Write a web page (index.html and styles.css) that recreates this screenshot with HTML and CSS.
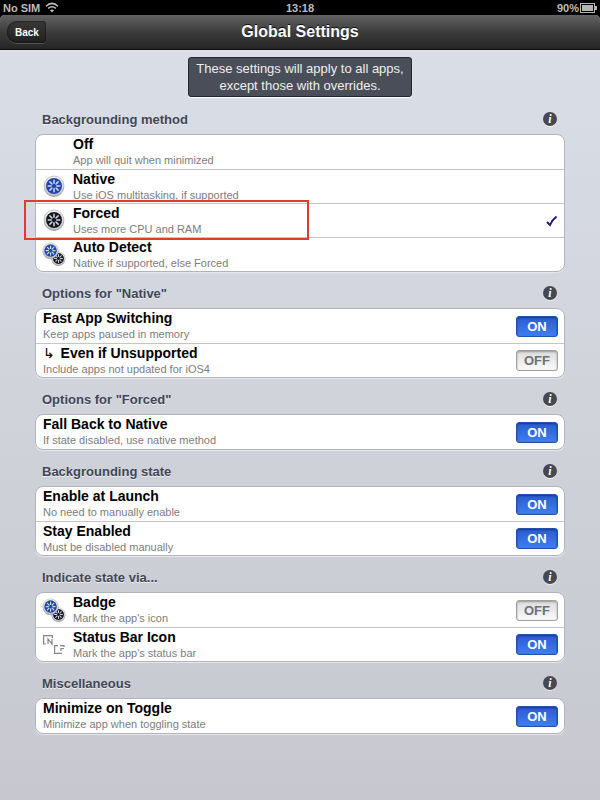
FILE: index.html
```html
<!DOCTYPE html>
<html lang="en">
<head>
    <meta charset="UTF-8">
    <meta name="viewport" content="width=device-width, initial-scale=1.0">
    <title>Global Settings</title>
    <link rel="stylesheet" href="styles.css">
</head>
<body>
    <!-- shared icon shapes -->
    <svg class="sprite" aria-hidden="true">
        <defs>
            <linearGradient id="rim" x1="0" y1="0" x2="0" y2="1">
                <stop offset="0" stop-color="#f4f4f6"/>
                <stop offset="1" stop-color="#c4c4c8"/>
            </linearGradient>
            <g id="gear">
                <circle cx="11" cy="12" r="10" fill="#66666c" opacity="0.6"/>
                <circle cx="11" cy="11" r="10" fill="url(#rim)" stroke="#a5a5aa" stroke-width="0.6"/>
                <circle cx="11" cy="11" r="8" fill="currentColor"/>
                <g stroke="#cfdaf2" stroke-width="1.5" stroke-linecap="round">
                    <path d="M11 5.2v3M11 13.8v3M5.2 11h3M13.8 11h3M6.9 6.9l2.1 2.1M13 13l2.1 2.1M15.1 6.9l-2.1 2.1M9 13l-2.1 2.1"/>
                </g>
            </g>
            <g id="gears">
                <use href="#gear" class="black" transform="translate(8 8) scale(0.68)"/>
                <use href="#gear" class="blue" transform="translate(-1 -1) scale(0.78)"/>
            </g>
        </defs>
    </svg>

    <div class="status">
        <div class="carrier">
            No SIM
            <svg width="14" height="11" viewBox="0 0 14 11" fill="none" stroke="#bdbdbd" stroke-width="1.5">
                <path d="M1 4.2Q7-1.4 13 4.2M3.2 6.4Q7 3 10.8 6.4"/>
                <path d="M7 10.4L4.9 8.2Q7 6.6 9.1 8.2Z" fill="#bdbdbd" stroke="none"/>
            </svg>
        </div>
        <div class="clock">13:18</div>
        <div class="battery">
            90%
            <svg width="17" height="10" viewBox="0 0 17 10">
                <rect x="0.5" y="0.5" width="14" height="9" fill="none" stroke="#b5b5b5"/>
                <rect x="2" y="2" width="11" height="6" fill="#b5b5b5"/>
                <rect x="15" y="3" width="2" height="4" fill="#b5b5b5"/>
            </svg>
        </div>
    </div>

    <header class="navbar">
        <button type="button" class="back">Back</button>
        <h1>Global Settings</h1>
    </header>

    <main>
        <p class="hint">These settings will apply to all apps,<br>except those with overrides.</p>

        <section>
            <div class="heading"><h2>Backgrounding method</h2><button type="button" class="info" aria-label="Info">i</button></div>
            <div class="list">
                <label class="row">
                    <span class="icon"></span>
                    <span class="text"><b>Off</b><small>App will quit when minimized</small></span>
                    <input type="radio" name="method" class="pick">
                </label>
                <label class="row">
                    <svg class="icon blue" viewBox="0 0 22 23"><use href="#gear"/></svg>
                    <span class="text"><b>Native</b><small>Use iOS multitasking, if supported</small></span>
                    <input type="radio" name="method" class="pick">
                </label>
                <label class="row marked">
                    <svg class="icon black" viewBox="0 0 22 23"><use href="#gear"/></svg>
                    <span class="text"><b>Forced</b><small>Uses more CPU and RAM</small></span>
                    <input type="radio" name="method" class="pick" checked>
                    <svg class="check" width="12" height="12" viewBox="0 0 12 12"><path d="M1 7L4 10Q6 5 10.5 1.5" fill="none" stroke="#1d1a78" stroke-width="2"/></svg>
                </label>
                <label class="row">
                    <svg class="icon" viewBox="0 0 22 23"><use href="#gears"/></svg>
                    <span class="text"><b>Auto Detect</b><small>Native if supported, else Forced</small></span>
                    <input type="radio" name="method" class="pick">
                </label>
            </div>
        </section>

        <section>
            <div class="heading"><h2>Options for "Native"</h2><button type="button" class="info" aria-label="Info">i</button></div>
            <div class="list">
                <label class="row">
                    <span class="text"><b>Fast App Switching</b><small>Keep apps paused in memory</small></span>
                    <span class="switch"><input type="checkbox" checked><span class="on">ON</span><span class="off">OFF</span></span>
                </label>
                <label class="row">
                    <span class="text"><b><span class="arrow">↳</span> Even if Unsupported</b><small>Include apps not updated for iOS4</small></span>
                    <span class="switch"><input type="checkbox"><span class="on">ON</span><span class="off">OFF</span></span>
                </label>
            </div>
        </section>

        <section>
            <div class="heading"><h2>Options for "Forced"</h2><button type="button" class="info" aria-label="Info">i</button></div>
            <div class="list">
                <label class="row">
                    <span class="text"><b>Fall Back to Native</b><small>If state disabled, use native method</small></span>
                    <span class="switch"><input type="checkbox" checked><span class="on">ON</span><span class="off">OFF</span></span>
                </label>
            </div>
        </section>

        <section>
            <div class="heading"><h2>Backgrounding state</h2><button type="button" class="info" aria-label="Info">i</button></div>
            <div class="list">
                <label class="row">
                    <span class="text"><b>Enable at Launch</b><small>No need to manually enable</small></span>
                    <span class="switch"><input type="checkbox" checked><span class="on">ON</span><span class="off">OFF</span></span>
                </label>
                <label class="row">
                    <span class="text"><b>Stay Enabled</b><small>Must be disabled manually</small></span>
                    <span class="switch"><input type="checkbox" checked><span class="on">ON</span><span class="off">OFF</span></span>
                </label>
            </div>
        </section>

        <section>
            <div class="heading"><h2>Indicate state via...</h2><button type="button" class="info" aria-label="Info">i</button></div>
            <div class="list">
                <label class="row">
                    <svg class="icon" viewBox="0 0 22 23"><use href="#gears"/></svg>
                    <span class="text"><b>Badge</b><small>Mark the app's icon</small></span>
                    <span class="switch"><input type="checkbox"><span class="on">ON</span><span class="off">OFF</span></span>
                </label>
                <label class="row">
                    <svg class="icon" viewBox="0 0 22 23" fill="none" stroke="#858588" stroke-width="1.2">
                        <path d="M3 11H0.6V2.6H9.4V5M5 11V6L9 11V6"/>
                        <path d="M19 20.4H11.6V12.6H15M17 12.6H21V14M18 18V15.5H21"/>
                    </svg>
                    <span class="text"><b>Status Bar Icon</b><small>Mark the app's status bar</small></span>
                    <span class="switch"><input type="checkbox" checked><span class="on">ON</span><span class="off">OFF</span></span>
                </label>
            </div>
        </section>

        <section>
            <div class="heading"><h2>Miscellaneous</h2><button type="button" class="info" aria-label="Info">i</button></div>
            <div class="list">
                <label class="row">
                    <span class="text"><b>Minimize on Toggle</b><small>Minimize app when toggling state</small></span>
                    <span class="switch"><input type="checkbox" checked><span class="on">ON</span><span class="off">OFF</span></span>
                </label>
            </div>
        </section>
    </main>
</body>
</html>
```
FILE: styles.css
```css
*,
*::after {
    box-sizing: border-box;
}

body {
    margin: 0;
    min-height: 100vh;
    font-family: "Liberation Sans", Arial, sans-serif;
    background: linear-gradient(#dbdfe7, #c6c7cf) #c6c7cf;
}

.sprite {
    position: absolute;
    width: 0;
    height: 0;
}

.blue {
    color: #1f45ad;
}

.black {
    color: #17171a;
}

/* status bar */
.status {
    display: grid;
    grid-template-columns: 1fr auto 1fr;
    align-items: center;
    height: 15px;
    padding: 0 3px;
    background: #000;
    color: #bdbdbd;
    font-size: 11px;
    font-weight: bold;
}

.carrier,
.battery {
    display: flex;
    align-items: center;
    gap: 5px;
}

.battery {
    justify-content: flex-end;
    gap: 1px;
}

/* navigation bar */
.navbar {
    display: grid;
    grid-template-columns: 1fr auto 1fr;
    align-items: center;
    height: 35px;
    padding: 0 7px;
    background: linear-gradient(#626262, #3c3c3c 50%, #252525);
    border-bottom: 1px solid #111;
    border-radius: 5px 5px 0 0;
    box-shadow: 0 -6px 0 #000;
}

.navbar h1 {
    margin: 0;
    color: #fff;
    font-size: 16px;
    text-shadow: 0 -1px 0 #111;
}

.back {
    justify-self: start;
    height: 22px;
    padding: 0 7px 0 8px;
    border: 0;
    border-radius: 10px 4px 4px 10px;
    background: linear-gradient(#383838, #202020);
    box-shadow: inset 0 0 2px #000, 0 1px 0 #555;
    color: #fff;
    font: bold 10px "Liberation Sans", Arial, sans-serif;
}

main {
    display: flex;
    flex-direction: column;
    padding: 7px 35px;
}

.hint {
    align-self: center;
    margin: 0 0 1px;
    padding: 2px 7px;
    border: 1px solid #24272f;
    border-radius: 3px;
    background: #4a4e59;
    box-shadow: 0 1px 1px #fff;
    color: #eee;
    font-size: 13px;
    line-height: 17px;
    text-align: center;
}

/* groups */
.heading {
    display: flex;
    justify-content: space-between;
    align-items: center;
    height: 36px;
    padding: 6px 8px 0 7px;
}

.heading h2 {
    margin: 0;
    color: #3f4656;
    font-size: 13px;
    text-shadow: 0 1px 0 #eee;
}

.info {
    width: 14px;
    height: 14px;
    padding: 0;
    border: 0;
    border-radius: 50%;
    background: #46474f;
    box-shadow: 0 1px 0 #eee;
    color: #fff;
    font: italic bold 12px/14px "Liberation Serif", serif;
}

.list {
    border: 1px solid #b3b4bb;
    border-radius: 8px;
    background: #fff;
    box-shadow: 0 1px 0 #e6e7eb;
}

.row {
    position: relative;
    display: flex;
    align-items: center;
    height: 34px;
    padding: 0 6px 0 7px;
}

.row + .row {
    border-top: 1px solid #c4c5c9;
}

.icon {
    width: 22px;
    height: 23px;
    margin-right: 8px;
    overflow: visible;
}

.text {
    flex: 1;
    display: flex;
    flex-direction: column;
}

.text b {
    font-size: 14px;
    line-height: 16px;
}

.text small {
    color: #7d7d7d;
    font-size: 11px;
    line-height: 16px;
}

.arrow {
    margin-right: 2px;
    font-family: "DejaVu Sans", sans-serif;
    font-weight: normal;
}

.pick {
    appearance: none;
    width: 0;
    height: 0;
    margin: 0;
}

.check {
    visibility: hidden;
}

.pick:checked + .check {
    visibility: visible;
}

/* red frame around the highlighted method */
.marked::after {
    content: "";
    position: absolute;
    top: -4px;
    bottom: -3px;
    left: -12px;
    width: 54%;
    border: 2px solid #e23b2e;
    z-index: 1;
}

.switch {
    display: flex;
}

.switch input {
    appearance: none;
    width: 0;
    height: 0;
    margin: 0;
}

.on,
.off {
    width: 42px;
    height: 21px;
    border: 1px solid #2450a8;
    border-radius: 3px;
    background: linear-gradient(#2a5bce, #3f7ef0);
    box-shadow: inset 0 1px 2px #163b8c;
    color: #fff;
    font-size: 13px;
    font-weight: bold;
    line-height: 20px;
    text-align: center;
}

.off {
    border-color: #a0a0a0;
    background: linear-gradient(#dcdcdc, #fafafa);
    box-shadow: inset 0 1px 2px #999;
    color: #707070;
}

.switch input:checked ~ .off,
.switch input:not(:checked) ~ .on {
    display: none;
}
```
